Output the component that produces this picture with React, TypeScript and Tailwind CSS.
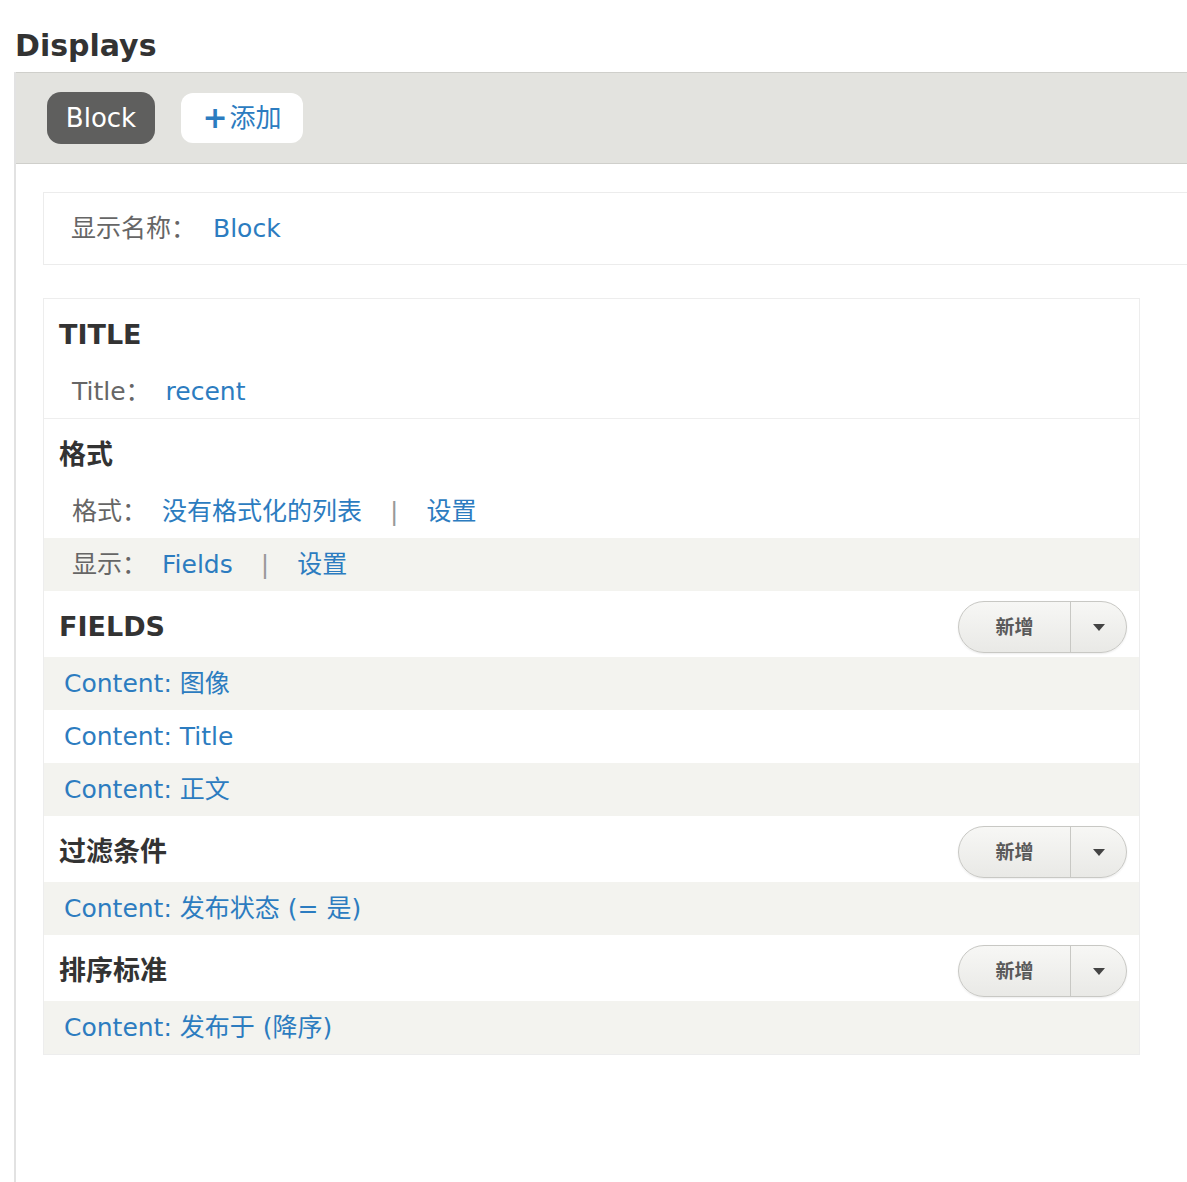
const font = { fontFamily: '"DejaVu Sans", "Noto Sans CJK SC", sans-serif' };

function SplitButton() {
  return (
    <div className="flex h-[52px] w-[169px] overflow-hidden rounded-full border border-[#c8c8c4] bg-gradient-to-b from-[#f7f7f5] to-[#e9e9e6] shadow-[0_1px_2px_rgba(0,0,0,0.08)]">
      <span className="flex w-[111px] items-center justify-center text-[19px] font-bold text-[#5a5a5a]">新增</span>
      <span className="flex flex-1 items-center justify-center border-l border-[#c8c8c4]">
        <svg width="12" height="7" viewBox="0 0 12 7">
          <path d="M0 0h12L6 7z" fill="#444" />
        </svg>
      </span>
    </div>
  );
}

function SectionHeading({ title, withButton }: { title: string; withButton?: boolean }) {
  return (
    <div className="flex h-[66px] items-center justify-between pl-[15px] pr-[12px] pt-[6px]">
      <h3 className="text-[27px] font-bold leading-[36px] text-[#333]">{title}</h3>
      {withButton ? <SplitButton /> : null}
    </div>
  );
}

function DetailRow({ label, parts, shaded }: { label: string; parts: string[]; shaded?: boolean }) {
  return (
    <div className={`flex h-[53px] items-center pl-[28px] text-[25px] ${shaded ? "bg-[#f3f3ef]" : ""}`}>
      <span className="mr-[15px] text-[#666]">{label}</span>
      {parts.map((part, i) => (
        <span key={i} className="flex items-center">
          {i > 0 ? <span className="mx-[28px] text-[#999]">|</span> : null}
          <span className="text-[#2c7cc0]">{part}</span>
        </span>
      ))}
    </div>
  );
}

function LinkRow({ text, shaded }: { text: string; shaded?: boolean }) {
  return (
    <div className={`flex h-[53px] items-center pl-[20px] text-[25px] text-[#2c7cc0] ${shaded ? "bg-[#f3f3ef]" : ""}`}>
      {text}
    </div>
  );
}

export default function App() {
  return (
    <div className="h-[1182px] w-[1187px] overflow-hidden bg-white" style={font}>
      <h2 className="pl-[15px] pt-[26px] text-[30px] font-bold leading-[40px] text-[#333]">Displays</h2>
      <div className="ml-[14px] mt-[6px] h-[1200px] border-l-2 border-[#e2e2e2]">
        <div className="flex h-[92px] items-center gap-[26px] border-y border-[#cfcfcb] bg-[#e3e3df] pl-[31px]">
          <span className="flex h-[52px] w-[108px] items-center justify-center rounded-[14px] bg-[#5f5f5e] text-[26px] text-white">
            Block
          </span>
          <span className="flex h-[50px] w-[122px] items-center justify-center gap-[2px] rounded-[12px] bg-white text-[26px] text-[#2c7cc0]">
            <span className="text-[30px] font-bold leading-none">+</span>添加
          </span>
        </div>

        <div className="pl-[27px] pt-[28px]">
          <div className="flex h-[73px] items-center border-y border-l border-[#ececec] pl-[27px] text-[25px]">
            <span className="mr-[17px] text-[#666]">显示名称：</span>
            <span className="text-[#2c7cc0]">Block</span>
          </div>

          <div className="mt-[33px] w-[1097px] border border-[#ededed]">
            <SectionHeading title="TITLE" />
            <DetailRow label="Title：" parts={["recent"]} />
            <div className="border-t border-[#eeeeee]">
              <SectionHeading title="格式" />
              <DetailRow label="格式：" parts={["没有格式化的列表", "设置"]} />
              <DetailRow label="显示：" parts={["Fields", "设置"]} shaded />
            </div>
            <SectionHeading title="FIELDS" withButton />
            <LinkRow text="Content: 图像" shaded />
            <LinkRow text="Content: Title" />
            <LinkRow text="Content: 正文" shaded />
            <SectionHeading title="过滤条件" withButton />
            <LinkRow text="Content: 发布状态 (= 是)" shaded />
            <SectionHeading title="排序标准" withButton />
            <LinkRow text="Content: 发布于 (降序)" shaded />
          </div>
        </div>
      </div>
    </div>
  );
}
